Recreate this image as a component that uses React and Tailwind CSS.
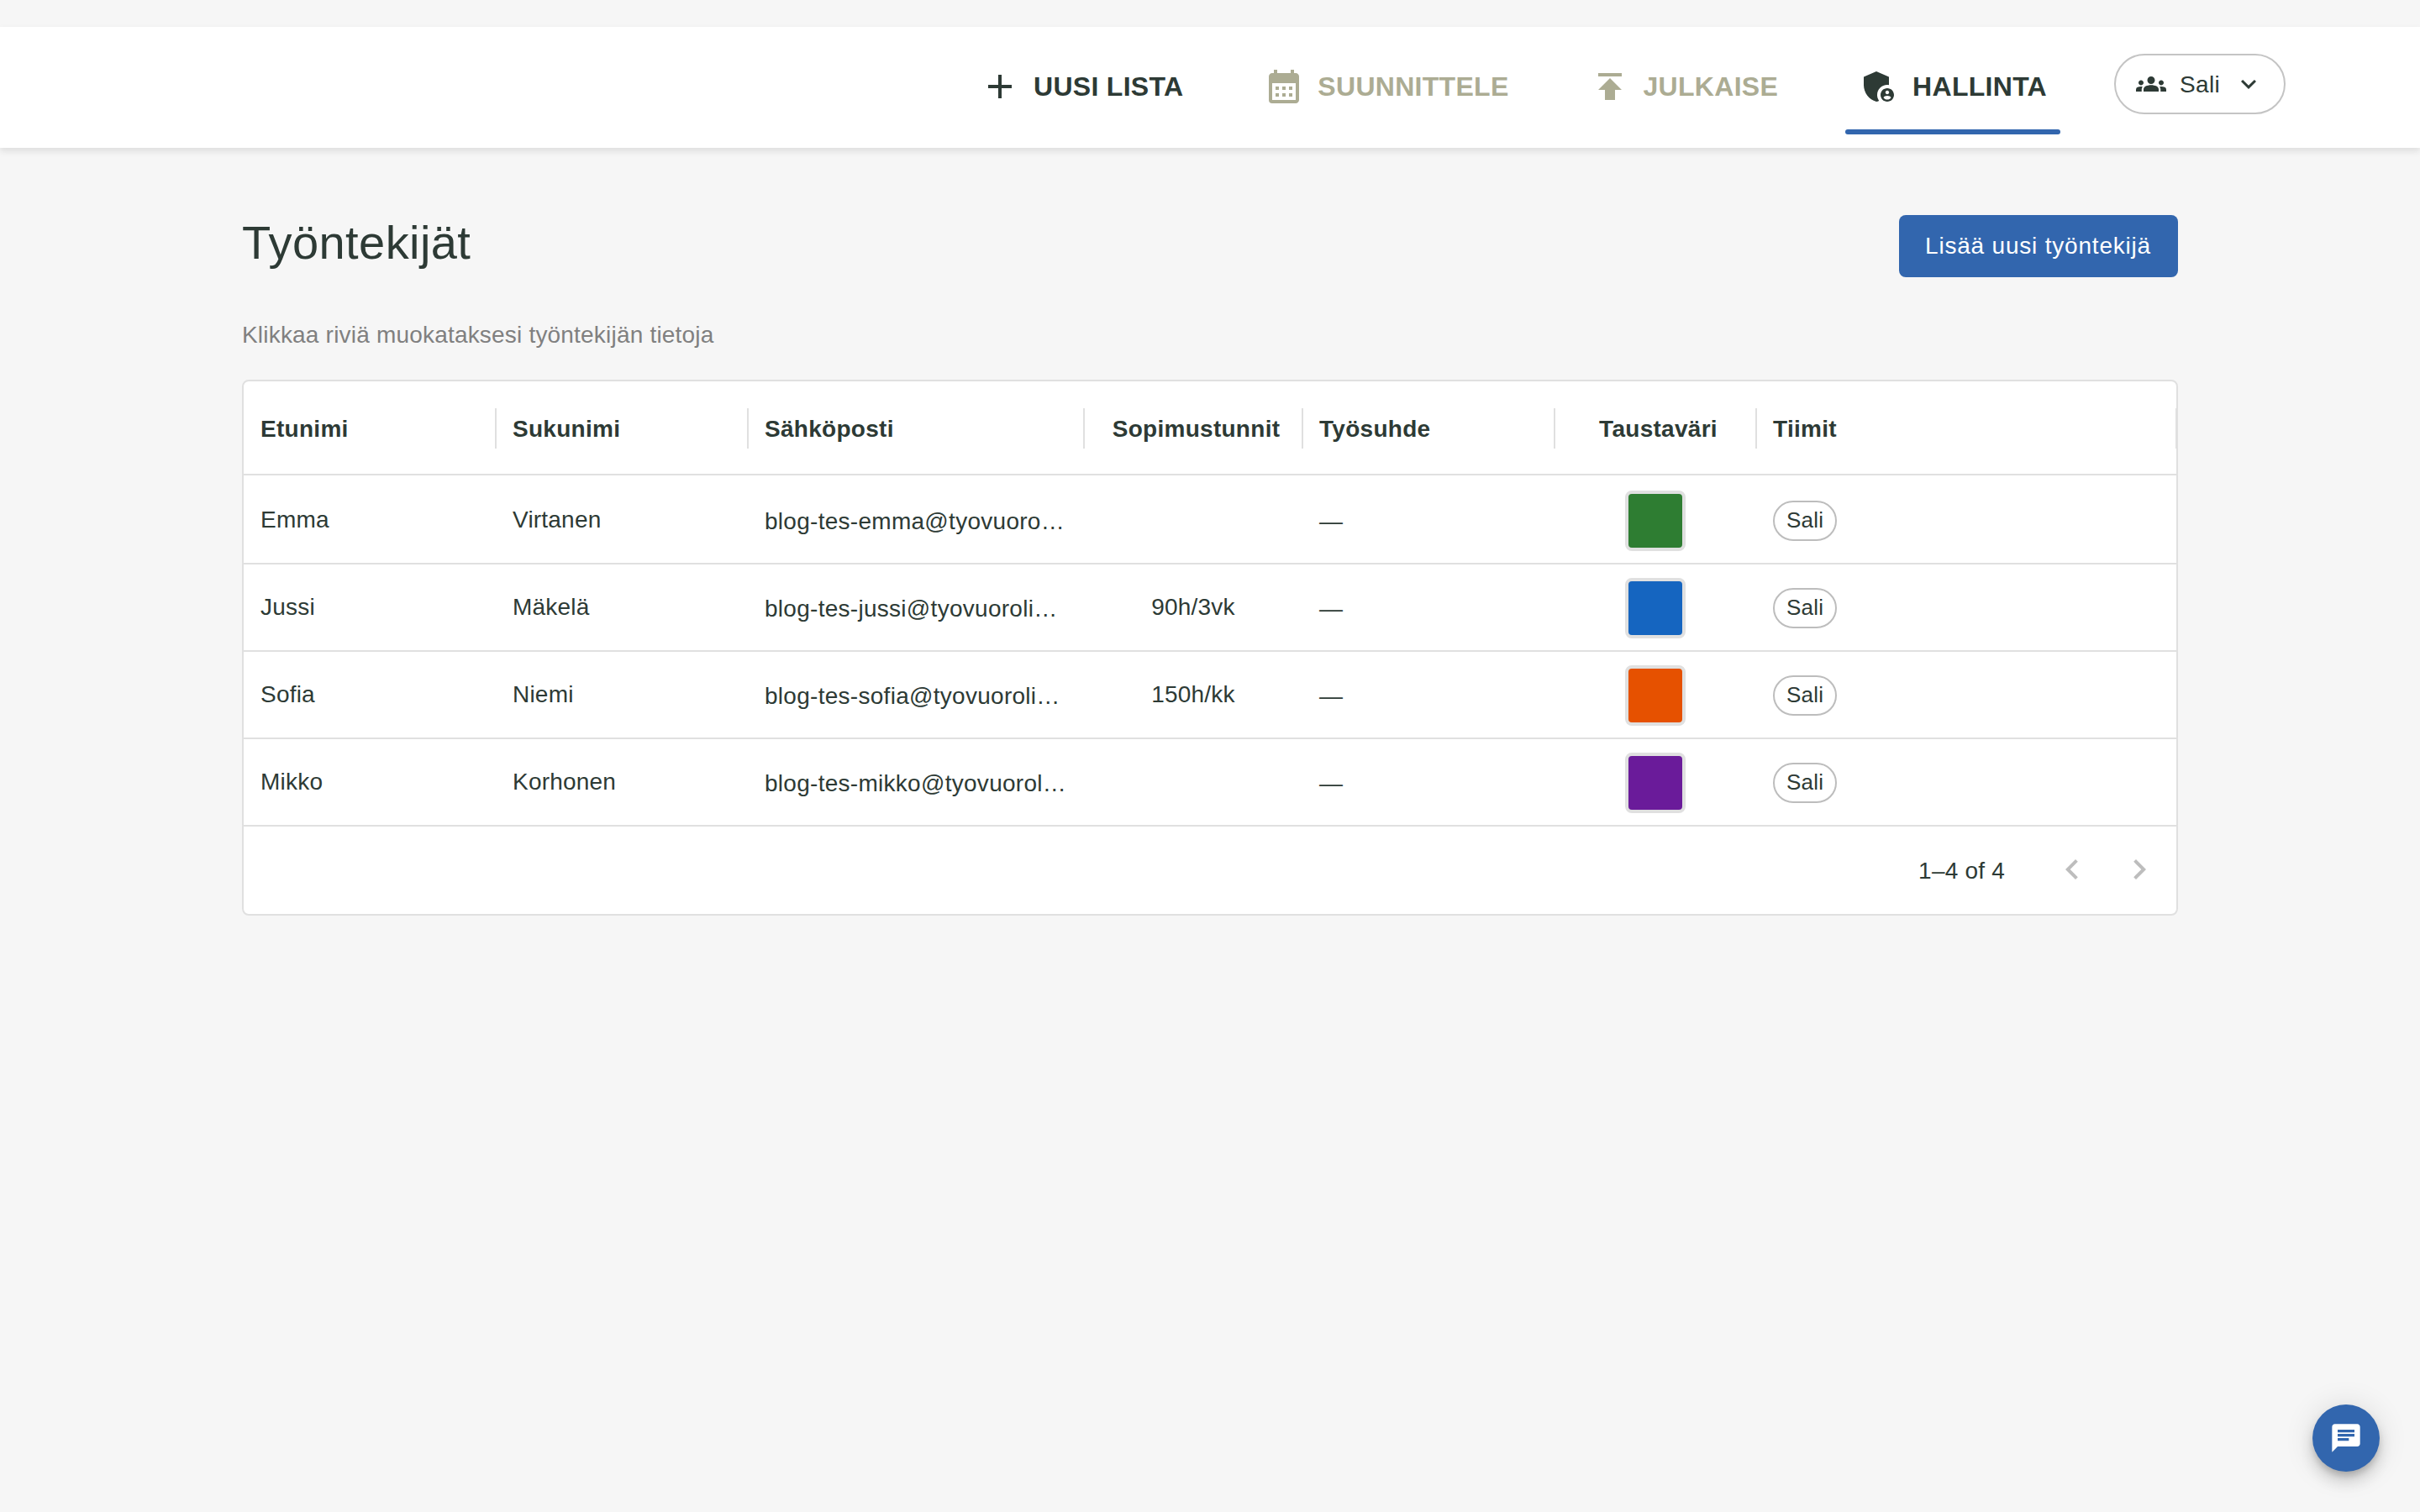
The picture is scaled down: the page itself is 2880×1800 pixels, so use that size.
import {
  MdAdd,
  MdAdminPanelSettings,
  MdCalendarMonth,
  MdChat,
  MdExpandMore,
  MdGroups,
  MdKeyboardArrowLeft,
  MdKeyboardArrowRight,
  MdPublish,
} from "react-icons/md";

const navItems = [
  { label: "UUSI LISTA", icon: MdAdd },
  { label: "SUUNNITTELE", icon: MdCalendarMonth, disabled: true },
  { label: "JULKAISE", icon: MdPublish, disabled: true },
  { label: "HALLINTA", icon: MdAdminPanelSettings, active: true },
];

const columns = [
  { header: "Etunimi", width: "w-[300px]" },
  { header: "Sukunimi", width: "w-[300px]" },
  { header: "Sähköposti", width: "w-[400px]" },
  { header: "Sopimustunnit", width: "w-[260px]", center: true },
  { header: "Työsuhde", width: "w-[300px]" },
  { header: "Taustaväri", width: "w-[240px]", center: true },
  { header: "Tiimit", width: "w-[500px]" },
];

const employees = [
  {
    firstName: "Emma",
    lastName: "Virtanen",
    email: "blog-tes-emma@tyovuorolista.fi",
    hours: "",
    color: "bg-[#2e7d32]",
    team: "Sali",
  },
  {
    firstName: "Jussi",
    lastName: "Mäkelä",
    email: "blog-tes-jussi@tyovuorolista.fi",
    hours: "90h/3vk",
    color: "bg-[#1565c0]",
    team: "Sali",
  },
  {
    firstName: "Sofia",
    lastName: "Niemi",
    email: "blog-tes-sofia@tyovuorolista.fi",
    hours: "150h/kk",
    color: "bg-[#e65100]",
    team: "Sali",
  },
  {
    firstName: "Mikko",
    lastName: "Korhonen",
    email: "blog-tes-mikko@tyovuorolista.fi",
    hours: "",
    color: "bg-[#6a1b9a]",
    team: "Sali",
  },
];

function NavButton({ label, icon: Icon, disabled, active }) {
  return (
    <button
      className={`flex flex-col h-28 ${
        disabled ? "text-[#acac93]" : "text-[#2d3a35]"
      }`}
    >
      <span className="flex flex-1 items-center gap-4 px-4 pt-1">
        <Icon className="size-12" />
        <span className="text-[32px] leading-none font-bold tracking-[0.009em] whitespace-nowrap">
          {label}
        </span>
      </span>
      <span
        className={`h-1.5 w-full rounded-sm ${active ? "bg-[#3266ae]" : ""}`}
      />
    </button>
  );
}

function Header() {
  return (
    <header className="relative mt-8 flex h-36 items-start justify-end bg-white pr-40 shadow-[0_4px_8px_rgba(0,0,0,0.1)]">
      <nav className="mt-4 mr-16 flex gap-16">
        {navItems.map((item) => (
          <NavButton key={item.label} {...item} />
        ))}
      </nav>
      <button className="mt-8 flex h-[72px] w-[204px] items-center justify-between rounded-full border-2 border-[#c4c4c4] px-6 text-[28px] tracking-[0.01em]">
        <MdGroups className="size-9" />
        <span className="pt-px">Sali</span>
        <MdExpandMore className="size-9" />
      </button>
    </header>
  );
}

function HeaderCell({ header, width, center }) {
  return (
    <div className={`flex items-center ${width}`}>
      <div
        className={`flex-1 truncate pt-0.5 font-bold tracking-[0.01em] ${
          center ? "text-center pl-5 pr-3" : "pl-5"
        }`}
      >
        {header}
      </div>
      <div className="-mr-px h-12 w-0.5 shrink-0 bg-[#e0e0e0]" />
    </div>
  );
}

function EmployeeRow({ employee, first }) {
  return (
    <div
      className={`flex h-[104px] border-[#e0e0e0] ${
        first ? "pt-0.5" : "border-t-2"
      }`}
    >
      <div className="w-[300px] px-5 leading-[102px]">{employee.firstName}</div>
      <div className="w-[300px] px-5 leading-[102px]">{employee.lastName}</div>
      <div className="w-[400px] truncate px-5 leading-[106px] tracking-[0.01em]">
        {employee.email}
      </div>
      <div className="w-[260px] px-5 text-center leading-[102px]">
        {employee.hours}
      </div>
      <div className="w-[300px] px-5 leading-[106px]">—</div>
      <div className="flex w-[240px] items-center justify-center pt-0.5">
        <div
          className={`size-[72px] rounded-lg border-4 border-[#e0e0e0] ${employee.color}`}
        />
      </div>
      <div className="flex items-center px-5 pt-0.5">
        <span className="flex h-12 items-center rounded-full border-2 border-[#bdbdbd] px-3.5 pb-0.5 text-[26px] leading-none">
          {employee.team}
        </span>
      </div>
    </div>
  );
}

function EmployeeTable() {
  return (
    <div className="overflow-hidden rounded-lg border-2 border-[#e0e0e0] bg-white text-[28px] tracking-[0.0075em]">
      <div className="flex h-28 border-b-2 border-[#e0e0e0] pt-0.5">
        {columns.map((column) => (
          <HeaderCell key={column.header} {...column} />
        ))}
      </div>
      {employees.map((employee, i) => (
        <EmployeeRow key={employee.email} employee={employee} first={i === 0} />
      ))}
      <div className="flex h-[106px] items-center justify-end border-t-2 border-[#e0e0e0] pr-5">
        <span className="mr-14 pt-px">1–4 of 4</span>
        <div className="flex gap-8 pb-0.5 text-[#bdbdbd]">
          <MdKeyboardArrowLeft className="size-12" />
          <MdKeyboardArrowRight className="size-12" />
        </div>
      </div>
    </div>
  );
}

export default function App() {
  return (
    <div className="flow-root h-[1800px] w-[2880px] bg-[#f6f6f6] font-['Liberation_Sans',Arial,sans-serif] text-[#2d3a35]">
      <Header />
      <main className="mx-72 pt-20">
        <div className="flex items-start justify-between">
          <h1 className="text-[56px] leading-[66px] tracking-[0.0075em]">
            Työntekijät
          </h1>
          <button className="h-[74px] w-[332px] rounded-lg bg-[#3266ae] pr-px text-[28px] tracking-[0.02857em] text-white">
            Lisää uusi työntekijä
          </button>
        </div>
        <p className="mt-12 mb-8 text-[28px] leading-[42px] tracking-[0.007em] text-[#808080]">
          Klikkaa riviä muokataksesi työntekijän tietoja
        </p>
        <EmployeeTable />
      </main>
      <button className="fixed right-12 bottom-12 flex size-20 items-center justify-center rounded-full bg-[#3266ae] text-white shadow-[0_6px_10px_-2px_rgba(0,0,0,0.2),0_12px_20px_rgba(0,0,0,0.14),0_2px_36px_rgba(0,0,0,0.12)]">
        <MdChat className="size-10" />
      </button>
    </div>
  );
}
